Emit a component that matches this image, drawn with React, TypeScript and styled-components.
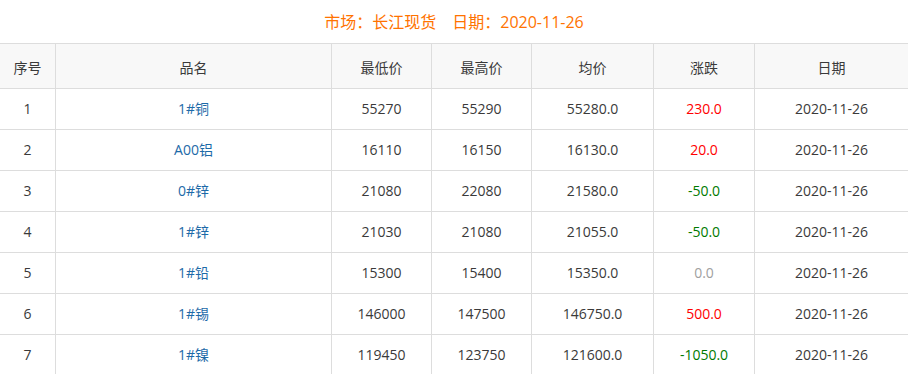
import React from 'react'
import styled, { createGlobalStyle } from 'styled-components'

type Row = {
  name: string
  low: string
  high: string
  avg: string
  change: string
  date: string
}

const rows: Row[] = [
  { name: '1#铜', low: '55270', high: '55290', avg: '55280.0', change: '230.0', date: '2020-11-26' },
  { name: 'A00铝', low: '16110', high: '16150', avg: '16130.0', change: '20.0', date: '2020-11-26' },
  { name: '0#锌', low: '21080', high: '22080', avg: '21580.0', change: '-50.0', date: '2020-11-26' },
  { name: '1#锌', low: '21030', high: '21080', avg: '21055.0', change: '-50.0', date: '2020-11-26' },
  { name: '1#铅', low: '15300', high: '15400', avg: '15350.0', change: '0.0', date: '2020-11-26' },
  { name: '1#锡', low: '146000', high: '147500', avg: '146750.0', change: '500.0', date: '2020-11-26' },
  { name: '1#镍', low: '119450', high: '123750', avg: '121600.0', change: '-1050.0', date: '2020-11-26' },
]

const headers = ['序号', '品名', '最低价', '最高价', '均价', '涨跌', '日期']

type Trend = 'up' | 'down' | 'flat'

const trendOf = (v: string): Trend => {
  const n = parseFloat(v)
  if (n > 0) return 'up'
  if (n < 0) return 'down'
  return 'flat'
}

const trendColors: Record<Trend, string> = {
  up: '#ff0000',
  down: '#007a00',
  flat: '#a0a0a0',
}

const App = () => {
  return (
    <>
      <GlobalStyle />
      <Wrapper>
        <Title>
          <span>市场：长江现货</span>
          <TitleGap>日期：2020-11-26</TitleGap>
        </Title>
        <Table>
          <HeadRow>
            {headers.map((h) => (
              <HeadCell key={h}>{h}</HeadCell>
            ))}
          </HeadRow>
          {rows.map((r, i) => (
            <BodyRow key={r.name}>
              <Cell>{i + 1}</Cell>
              <NameCell>{r.name}</NameCell>
              <Cell>{r.low}</Cell>
              <Cell>{r.high}</Cell>
              <Cell>{r.avg}</Cell>
              <ChangeCell $trend={trendOf(r.change)}>{r.change}</ChangeCell>
              <Cell>{r.date}</Cell>
            </BodyRow>
          ))}
        </Table>
      </Wrapper>
    </>
  )
}

const GlobalStyle = createGlobalStyle`
  body {
    margin: 0;
    background: #fff;
    font-family: "Open Sans", "Noto Sans CJK SC", sans-serif;
  }
`

const Wrapper = styled.div`
  width: 908px;
`

const Title = styled.div`
  height: 43px;
  line-height: 45px;
  text-align: center;
  font-size: 16px;
  color: #ff7300;
`

const TitleGap = styled.span`
  margin-left: 16px;
`

const Table = styled.div`
  border-top: 1px solid #dddddd;
  font-size: 14px;
  color: #3a3a3a;
`

const rowGrid = `
  display: grid;
  grid-template-columns: 56px 276px 100px 100px 122px 101px 1fr;
  border-bottom: 1px solid #dddddd;
`

const HeadRow = styled.div`
  ${rowGrid}
  height: 45px;
  box-sizing: border-box;
  background: #f8f8f8;
`

const BodyRow = styled.div`
  ${rowGrid}
  height: 41px;
  box-sizing: border-box;
`

const Cell = styled.div`
  display: flex;
  align-items: center;
  justify-content: center;
  padding-bottom: 2px;
  border-right: 1px solid #dddddd;
  white-space: nowrap;
  &:last-child {
    border-right: none;
  }
`

const HeadCell = styled(Cell)`
  padding-bottom: 0;
  padding-top: 1px;
`

const NameCell = styled(Cell)`
  color: #1d6aa8;
`

const ChangeCell = styled(Cell)<{ $trend: Trend }>`
  color: ${({ $trend }) => trendColors[$trend]};
`

export default App
